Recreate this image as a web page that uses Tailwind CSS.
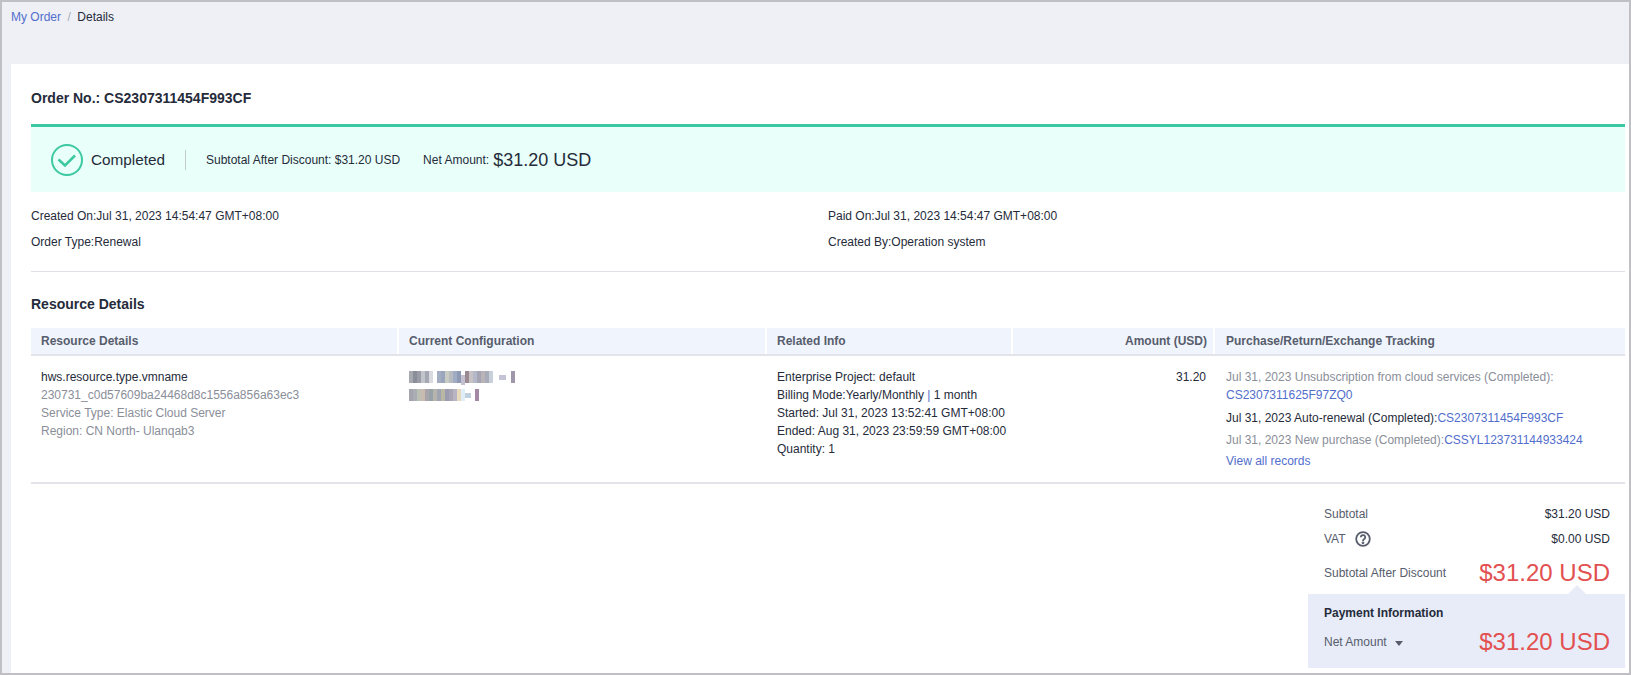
<!DOCTYPE html>
<html lang="en">
<head>
    <meta charset="UTF-8">
    <title>Order Details</title>
    <script src="https://cdn.jsdelivr.net/npm/@tailwindcss/browser@4"></script>
</head>
<body class="bg-white font-['Liberation_Sans',Arial,sans-serif] text-xs text-[#252b3a]">
<div class="h-[675px] w-[1631px] overflow-hidden border-2 border-[#bfbfc4] bg-[#eef0f5] pl-[9px]">
    <!-- breadcrumb -->
    <div class="flex h-[62px] items-start gap-[6.5px] pt-[8px] leading-[14px]">
        <a href="#" class="text-[#526ecc]">My Order</a>
        <span class="text-[#aaaeb8]">/</span>
        <span>Details</span>
    </div>

    <div class="h-[609px] bg-white pl-5 pr-[4px]">
        <h1 class="h-[60px] pt-[26px] text-sm leading-[16px] font-bold">Order No.: CS2307311454F993CF</h1>

        <!-- status banner -->
        <div class="flex h-[68px] items-center border-t-[3px] border-[#3cc8a0] bg-[#e9fff9] pl-5">
            <svg class="h-8 w-8" viewBox="0 0 32 32" fill="none" stroke="#3cc8a0" stroke-width="2">
                <circle cx="16" cy="16" r="15"/>
                <path d="M7.5 15.5l6.5 6 10-10" stroke-width="2.5"/>
            </svg>
            <span class="ml-[8px] w-[94px] pt-[2px] text-[15.3px]">Completed</span>
            <span class="h-5 w-px bg-[#c4c8cc]"></span>
            <span class="ml-5">Subtotal After Discount: $31.20 USD</span>
            <span class="ml-[23px]">Net Amount:</span>
            <span class="ml-[4px] text-lg leading-none">$31.20 USD</span>
        </div>

        <div class="grid grid-cols-2 gap-y-[12px] border-b border-[#dfe1e6] pt-[17px] pb-[22px] leading-[14px]">
            <div>Created On:Jul 31, 2023 14:54:47 GMT+08:00</div>
            <div>Paid On:Jul 31, 2023 14:54:47 GMT+08:00</div>
            <div>Order Type:Renewal</div>
            <div>Created By:Operation system</div>
        </div>

        <h2 class="h-[56px] pt-[24px] text-sm leading-[16px] font-bold">Resource Details</h2>

        <!-- table header -->
        <div class="grid grid-cols-[368px_368px_246px_202px_410px] border-b-2 border-[#e2e4ea] bg-[#f0f4fc] font-bold text-[#575d6c]">
            <div class="h-[26px] border-r-2 border-white pl-[10px] leading-[26px]">Resource Details</div>
            <div class="h-[26px] border-r-2 border-white pl-[10px] leading-[26px]">Current Configuration</div>
            <div class="h-[26px] border-r-2 border-white pl-[10px] leading-[26px]">Related Info</div>
            <div class="h-[26px] border-r-2 border-white pr-[6px] text-right leading-[26px]">Amount (USD)</div>
            <div class="h-[26px] pl-[11px] leading-[26px]">Purchase/Return/Exchange Tracking</div>
        </div>

        <!-- table row -->
        <div class="grid h-[128px] grid-cols-[368px_368px_246px_202px_410px] border-b-2 border-[#e2e4ea] pt-[12px] leading-[18px]">
            <div class="pl-[10px]">
                <div>hws.resource.type.vmname</div>
                <div class="text-[#8a8e99]">230731_c0d57609ba24468d8c1556a856a63ec3</div>
                <div class="text-[#8a8e99]">Service Type: Elastic Cloud Server</div>
                <div class="text-[#8a8e99]">Region: CN North- Ulanqab3</div>
            </div>
            <div class="pl-[10px] pt-[3px]">
                <!-- pixelated config values -->
                <svg width="108" height="32" viewBox="0 0 108 32" class="blur-[0.6px]">
                    <g>
                        <rect x="0" y="0" width="4" height="12" fill="#a8aab2"/><rect x="4" y="0" width="4" height="12" fill="#8a8e98"/><rect x="8" y="0" width="4" height="12" fill="#9a9ca6"/><rect x="12" y="0" width="4" height="12" fill="#c2c4cc"/><rect x="16" y="0" width="4" height="12" fill="#a4a8b2"/><rect x="20" y="0" width="4" height="12" fill="#d8dae0"/>
                        <rect x="28" y="0" width="4" height="12" fill="#a3aec2"/><rect x="32" y="0" width="4" height="12" fill="#9aa6bc"/><rect x="36" y="0" width="4" height="12" fill="#c9ccc2"/><rect x="40" y="0" width="4" height="12" fill="#b8bcc0"/><rect x="44" y="0" width="4" height="12" fill="#a0acc4"/><rect x="48" y="0" width="4" height="12" fill="#8e9ab4"/><rect x="52" y="4" width="4" height="10" fill="#c4c0d0"/>
                        <rect x="56" y="0" width="4" height="12" fill="#9c8a92"/><rect x="60" y="0" width="4" height="12" fill="#c8c2c4"/><rect x="64" y="0" width="4" height="12" fill="#b4b8c8"/><rect x="68" y="0" width="4" height="12" fill="#a4a4b2"/><rect x="72" y="0" width="4" height="12" fill="#bab4b8"/><rect x="76" y="0" width="4" height="12" fill="#a8acb8"/><rect x="80" y="0" width="4" height="12" fill="#c8d0dc"/>
                        <rect x="90" y="4" width="7" height="5" fill="#c4c4d6"/><rect x="102" y="0" width="4" height="12" fill="#a096ac"/>
                    </g>
                    <g transform="translate(0,18)">
                        <rect x="0" y="0" width="4" height="12" fill="#a4a4ac"/><rect x="4" y="0" width="4" height="12" fill="#aaaeb4"/><rect x="8" y="0" width="4" height="12" fill="#bcc0b4"/><rect x="12" y="0" width="4" height="12" fill="#c8bcb0"/><rect x="16" y="0" width="4" height="12" fill="#a8a4ac"/><rect x="20" y="0" width="4" height="12" fill="#98a0a8"/><rect x="24" y="0" width="4" height="12" fill="#b4b4ac"/>
                        <rect x="28" y="0" width="4" height="12" fill="#a0a4b0"/><rect x="32" y="0" width="4" height="12" fill="#b8b8a4"/><rect x="36" y="0" width="4" height="12" fill="#9c9cb0"/><rect x="40" y="0" width="4" height="12" fill="#a8a4b4"/><rect x="44" y="0" width="4" height="12" fill="#b8b4c4"/><rect x="48" y="0" width="4" height="12" fill="#e8d8bc"/><rect x="52" y="0" width="4" height="12" fill="#e0eef8"/>
                        <rect x="56" y="4" width="6" height="5" fill="#c0d0dc"/><rect x="66" y="0" width="4" height="12" fill="#a488a6"/>
                    </g>
                </svg>
            </div>
            <div class="pl-[10px]">
                <div>Enterprise Project: default</div>
                <div>Billing Mode:Yearly/Monthly <span class="text-[#526ecc]">|</span> 1 month</div>
                <div>Started: Jul 31, 2023 13:52:41 GMT+08:00</div>
                <div>Ended: Aug 31, 2023 23:59:59 GMT+08:00</div>
                <div>Quantity: 1</div>
            </div>
            <div class="pr-[9px] text-right">31.20</div>
            <div class="pl-[11px]">
                <div class="text-[#8a8e99]">Jul 31, 2023 Unsubscription from cloud services (Completed):</div>
                <a href="#" class="block text-[#526ecc]">CS2307311625F97ZQ0</a>
                <div class="mt-[5px]">Jul 31, 2023 Auto-renewal (Completed):<a href="#" class="text-[#526ecc]">CS2307311454F993CF</a></div>
                <div class="mt-[4px] text-[#8a8e99]">Jul 31, 2023 New purchase (Completed):<a href="#" class="text-[#526ecc]">CSSYL123731144933424</a></div>
                <a href="#" class="mt-[3px] block text-[#526ecc]">View all records</a>
            </div>
        </div>

        <!-- totals -->
        <div class="mt-[15px] ml-auto w-[317px]">
            <div class="flex h-[24px] items-center justify-between pr-[15px] pl-[16px] pt-[6px] leading-[14px]">
                <span class="text-[#575d6c]">Subtotal</span>
                <span>$31.20 USD</span>
            </div>
            <div class="flex h-[25px] items-center justify-between pr-[15px] pl-[16px] pt-[6px] leading-[14px]">
                <span class="flex items-center gap-[9px] text-[#575d6c]">VAT
                    <svg class="h-4 w-4" viewBox="0 0 16 16" fill="none" stroke="#575d6c" stroke-width="1.8">
                        <circle cx="8" cy="8" r="6.8"/>
                        <path d="M5.8 6.2a2.2 2.2 0 1 1 3.4 1.9c-.8.5-1.2.9-1.2 1.8"/>
                        <circle cx="8" cy="11.8" r=".5" fill="#575d6c"/>
                    </svg>
                </span>
                <span>$0.00 USD</span>
            </div>
            <div class="mt-[1px] flex h-[45px] items-center justify-between pr-[15px] pl-[16px] pt-[2px]">
                <span class="text-[#575d6c]">Subtotal After Discount</span>
                <span class="text-2xl leading-none text-[#e25050]">$31.20 USD</span>
            </div>
            <div class="relative h-[74px] bg-[#e7ecf8] px-[16px] pt-[12px] pr-[15px]">
                <span class="absolute top-[-9px] right-[39px] h-0 w-0 border-x-[9px] border-b-[9px] border-x-transparent border-b-[#e7ecf8]"></span>
                <div class="leading-[14px] font-bold">Payment Information</div>
                <div class="mt-[7px] flex h-[30px] items-center justify-between">
                    <span class="flex items-center gap-[8px] text-[#575d6c]">Net Amount
                        <span class="mt-[2px] h-0 w-0 border-x-[4px] border-t-[5px] border-x-transparent border-t-[#575d6c]"></span>
                    </span>
                    <span class="text-2xl leading-none text-[#e25050]">$31.20 USD</span>
                </div>
            </div>
        </div>
    </div>
</div>
</body>
</html>
